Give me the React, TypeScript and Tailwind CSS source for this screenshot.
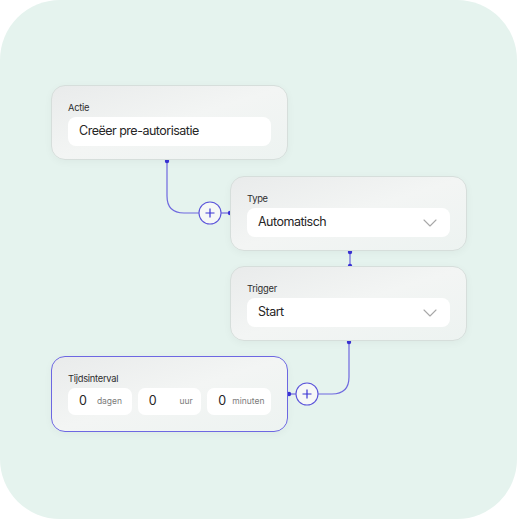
import { ChevronDown } from 'lucide-react';

const font = { fontFamily: 'Inter, "Noto Sans", sans-serif' };

function Card({
  left,
  top,
  label,
  active,
  children,
}: {
  left: number;
  top: number;
  label: string;
  active?: boolean;
  children: React.ReactNode;
}) {
  return (
    <div
      className={
        'absolute w-[237px] rounded-[14px] border bg-gradient-to-br from-[#e9ebeb] via-[#f3f5f4] to-[#edf3f1] px-[16px] pt-[16px] pb-[16px] shadow-[0_2px_8px_rgba(0,0,0,0.04)] ' +
        (active ? 'border-[#6d67e2] h-[76px]' : 'border-[#d6dedb] h-[75px]')
      }
      style={{ left, top }}
    >
      <div className="text-[9.3px] leading-[12px] tracking-[-0.25px] text-[#2e2e2e]">{label}</div>
      <div className="mt-[3px]">{children}</div>
    </div>
  );
}

function SelectBox({ value }: { value: string }) {
  return (
    <div className="flex h-[29px] items-center justify-between rounded-[8px] bg-white pl-[11px] pr-[8px]">
      <span className="text-[12.5px] tracking-[-0.5px] text-[#262626]">{value}</span>
      <ChevronDown className="h-[24px] w-[24px] text-[#a8a8a8]" strokeWidth={1.1} />
    </div>
  );
}

function NumField({ unit, gap }: { unit: string; gap: string }) {
  return (
    <div className="flex h-[27px] w-[64px] items-center rounded-[7px] bg-white pl-[11px]">
      <span className="text-[12.5px] text-[#262626]">0</span>
      <span className={'text-[8.5px] text-[#7b7b7b] ' + gap}>{unit}</span>
    </div>
  );
}

function Plus({ cx, cy }: { cx: number; cy: number }) {
  return (
    <g>
      <circle cx={cx} cy={cy} r={11} fill="#f6f8f7" stroke="#5b54da" strokeWidth={1.1} />
      <path d={`M${cx - 4.5} ${cy}H${cx + 4.5}M${cx} ${cy - 4.5}V${cy + 4.5}`} stroke="#3b34d4" strokeWidth={1.2} />
    </g>
  );
}

export default function App() {
  return (
    <div className="h-[519px] w-[519px] bg-white" style={font}>
      <div className="relative h-[519px] w-[517px] rounded-[60px] bg-[#e5f3ee]">
        <svg className="absolute inset-0" width={517} height={519}>
          <g fill="none" stroke="#6e68df" strokeWidth={1.2}>
            <path d="M167 161V196Q167 213 184 213H199" />
            <path d="M221 213H230" />
            <path d="M350 252V266" />
            <path d="M349 342V377Q349 394 332 394H318" />
            <path d="M296 394H289" />
          </g>
          <Plus cx={210} cy={213} />
          <Plus cx={307} cy={394} />
          <g fill="#3a33d6">
            <circle cx={167} cy={161} r={2.2} />
            <circle cx={230} cy={213} r={2.2} />
            <circle cx={350} cy={252} r={2.2} />
            <circle cx={350} cy={266} r={2.2} />
            <circle cx={349} cy={342} r={2.2} />
            <circle cx={289} cy={394} r={2.2} />
          </g>
        </svg>

        <Card left={51} top={85} label="Actie">
          <div className="flex h-[29px] items-center rounded-[8px] bg-white pl-[11px]">
            <span className="text-[12.5px] tracking-[-0.5px] text-[#262626]">Creëer pre-autorisatie</span>
          </div>
        </Card>

        <Card left={230} top={176} label="Type">
          <SelectBox value="Automatisch" />
        </Card>

        <Card left={230} top={266} label="Trigger">
          <SelectBox value="Start" />
        </Card>

        <Card left={51} top={356} label="Tijdsinterval" active>
          <div className="flex gap-[6px]">
            <NumField unit="dagen" gap="ml-[10px]" />
            <NumField unit="uur" gap="ml-[23px]" />
            <NumField unit="minuten" gap="ml-[6px]" />
          </div>
        </Card>
      </div>
    </div>
  );
}
